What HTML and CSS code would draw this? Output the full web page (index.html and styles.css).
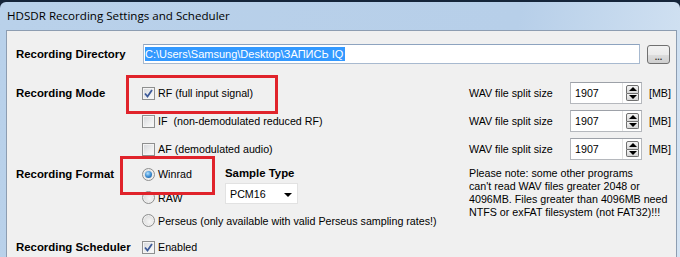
FILE: index.html
```html
<!DOCTYPE html>
<html lang="en">
<head>
	<meta charset="UTF-8">
	<title>HDSDR Recording Settings and Scheduler</title>
	<link rel="stylesheet" href="styles.css">
</head>
<body>
	<div class="window">
		<div class="title_bar">HDSDR Recording Settings and Scheduler</div>
		<div class="client">

			<div class="dir_row">
				<label class="group_label">Recording Directory</label>
				<div class="dir_input"><span class="selected_text">C:\Users\Samsung\Desktop\ЗАПИСЬ IQ</span></div>
				<button class="browse_button">...</button>
			</div>

			<div class="section mode_section">
				<label class="group_label">Recording Mode</label>
				<div class="option marked marked_rf">
					<span class="checkbox">
						<svg width="9" height="9" viewBox="0 0 9 9"><path d="M1 4.5 L3.5 7.5 L8 1" fill="none" stroke="#3d5a99" stroke-width="1.8"/></svg>
					</span>RF (full input signal)
				</div>
				<div class="split">
					<span class="split_label">WAV file split size</span>
					<div class="spin_box"><span class="spin_value">1907</span><span class="spin_buttons"><span class="spin_up"></span><span class="spin_down"></span></span></div>
					<span class="split_unit">[MB]</span>
				</div>
				<div class="option"><span class="checkbox"></span>IF&nbsp; (non-demodulated reduced RF)</div>
				<div class="split">
					<span class="split_label">WAV file split size</span>
					<div class="spin_box"><span class="spin_value">1907</span><span class="spin_buttons"><span class="spin_up"></span><span class="spin_down"></span></span></div>
					<span class="split_unit">[MB]</span>
				</div>
				<div class="option"><span class="checkbox"></span>AF (demodulated audio)</div>
				<div class="split">
					<span class="split_label">WAV file split size</span>
					<div class="spin_box"><span class="spin_value">1907</span><span class="spin_buttons"><span class="spin_up"></span><span class="spin_down"></span></span></div>
					<span class="split_unit">[MB]</span>
				</div>
			</div>

			<div class="section format_section">
				<label class="group_label format_label">Recording Format</label>
				<div class="format_options">
					<div class="format_top">
						<div class="format_radios">
							<div class="option winrad_row marked marked_winrad"><span class="radio selected"></span>Winrad</div>
							<div class="option raw_row"><span class="radio"></span>RAW</div>
						</div>
						<div class="sample_type">
							<div class="sample_title">Sample Type</div>
							<div class="dropdown"><span>PCM16</span><span class="dropdown_arrow"></span></div>
						</div>
					</div>
					<div class="option perseus_row"><span class="radio"></span>Perseus (only available with valid Perseus sampling rates!)</div>
				</div>
				<p class="note">Please note: some other programs<br>can't read WAV files greater 2048 or<br>4096MB. Files greater than 4096MB need<br>NTFS or exFAT filesystem (not FAT32)!!!</p>
			</div>

			<div class="section scheduler_section">
				<label class="group_label">Recording Scheduler</label>
				<div class="option">
					<span class="checkbox">
						<svg width="9" height="9" viewBox="0 0 9 9"><path d="M1 4.5 L3.5 7.5 L8 1" fill="none" stroke="#3d5a99" stroke-width="1.8"/></svg>
					</span>Enabled
				</div>
			</div>

		</div>
	</div>
</body>
</html>
```

FILE: styles.css
```css
* {
	box-sizing: border-box;
}

body {
	margin: 0;
	background-color: #15253a;
	font-family: "Liberation Sans", Arial, sans-serif;
	font-size: 10.7px;
	color: #000;
	overflow: hidden;
}

.window {
	width: 680px;
	height: 255px;
	margin-top: 2px;
	border-radius: 6px 6px 0 0;
	overflow: hidden;
	background: linear-gradient(100deg, #b9d1ea 0%, #b7cfe9 72%, #d5e4f3 100%);
}

.title_bar {
	height: 28px;
	padding-left: 7px;
	line-height: 28px;
	font-family: "Open Sans", "Noto Sans", sans-serif;
	font-size: 11.6px;
	color: #000;
}

.client {
	margin: 0 3px 0 6px;
	height: 227px;
	border: 1px solid #8d9db1;
	border-bottom: none;
	background-color: #f0f0f0;
	padding-left: 9px;
}

.group_label {
	font-weight: bold;
	font-size: 11.4px;
	display: block;
}

/* Directory row */
.dir_row {
	display: flex;
	align-items: center;
	margin-top: 13px;
	height: 20px;
}

.dir_row .group_label {
	width: 127px;
}

.dir_input {
	width: 497px;
	height: 20px;
	border: 1px solid #a7b9cf;
	border-top-color: #8da3bf;
	background-color: #fff;
	padding: 2px 1px;
	display: flex;
}

.selected_text {
	background-color: #3399ff;
	color: #fff;
	line-height: 14px;
	padding-right: 2px;
	font-size: 11px;
}

.browse_button {
	margin-left: 7px;
	width: 23px;
	height: 19px;
	border: 1px solid #707070;
	border-radius: 3px;
	background: linear-gradient(#f2f2f2 0%, #ebebeb 50%, #dddddd 51%, #cfcfcf 100%);
	font-family: "Liberation Sans", Arial, sans-serif;
	font-size: 9px;
	font-weight: bold;
	color: #333;
	padding: 6px 0 0 0;
	line-height: 10px;
}

/* Sections laid out in three columns */
.section {
	display: grid;
	grid-template-columns: 126px 327px 1fr;
}

.mode_section {
	margin-top: 15px;
	grid-template-rows: repeat(3, 28px);
}

.mode_section .group_label {
	grid-column: 1;
	align-self: center;
}

.mode_section .option {
	grid-column: 2;
}

.mode_section .split {
	grid-column: 3;
}

.option {
	display: flex;
	align-items: center;
	white-space: nowrap;
}

.checkbox {
	width: 13px;
	height: 13px;
	margin-right: 3px;
	border: 1px solid #8e8f8f;
	box-shadow: inset 0 0 0 1px #f4f4f4;
	background: linear-gradient(135deg, #d4d6da 0%, #eeeff0 60%, #fbfbfb 100%);
	display: flex;
	align-items: center;
	justify-content: center;
	flex-shrink: 0;
}

.radio {
	width: 13px;
	height: 13px;
	margin-right: 3px;
	border: 1px solid #8e8f8f;
	border-radius: 50%;
	background: radial-gradient(circle at 60% 60%, #f7f7f7 0%, #dcdcdc 70%, #cfcfcf 100%);
	box-shadow: inset 0 0 0 1px #f0f0f0;
	display: flex;
	align-items: center;
	justify-content: center;
	flex-shrink: 0;
}

.radio.selected::after {
	content: "";
	width: 7px;
	height: 7px;
	border-radius: 50%;
	background: radial-gradient(circle at 40% 35%, #b6e2ff 0%, #3f8fd3 50%, #174f8f 100%);
}

/* Red annotation frames drawn over the dialog */
.marked {
	position: relative;
}

.marked::before {
	content: "";
	position: absolute;
	border: 3px solid #e0232b;
}

.marked_rf::before {
	left: -16px;
	top: -4px;
	width: 146px;
	height: 33px;
}

.marked_winrad::before {
	left: -22px;
	top: -7px;
	width: 89px;
	height: 33px;
}

/* WAV split size */
.split {
	display: flex;
	align-items: center;
}

.split_label {
	width: 101px;
}

.spin_box {
	width: 72px;
	height: 22px;
	border: 1px solid #b5b8bd;
	border-top-color: #9da1a8;
	background-color: #fff;
	display: flex;
	align-items: center;
	padding-left: 4px;
}

.spin_value {
	flex: 1;
}

.spin_buttons {
	width: 19px;
	height: 20px;
	border-left: 1px solid #e3e3e3;
	padding: 2px 2px 2px 3px;
	display: flex;
	flex-direction: column;
}

.spin_up,
.spin_down {
	flex: 1;
	border: 1px solid #707070;
	background: linear-gradient(#f4f4f4, #d6d6d6);
	display: flex;
	align-items: center;
	justify-content: center;
}

.spin_up {
	border-radius: 2px 2px 0 0;
}

.spin_down {
	border-radius: 0 0 2px 2px;
	border-top: none;
}

.spin_up::after {
	content: "";
	border-left: 4px solid transparent;
	border-right: 4px solid transparent;
	border-bottom: 4px solid #000;
}

.spin_down::after {
	content: "";
	border-left: 4px solid transparent;
	border-right: 4px solid transparent;
	border-top: 4px solid #000;
}

.split_unit {
	margin-left: 7px;
}

/* Recording format */
.format_label {
	line-height: 22px;
}

.format_top {
	display: flex;
}

.format_radios {
	width: 83px;
}

.winrad_row {
	height: 22px;
}

.raw_row {
	height: 25px;
}

.perseus_row {
	height: 21px;
}

.sample_title {
	font-weight: bold;
	font-size: 11.4px;
	height: 20px;
	line-height: 20px;
}

.dropdown {
	width: 73px;
	height: 21px;
	border: 1px solid #e2e2e2;
	background-color: #fff;
	display: flex;
	align-items: center;
	justify-content: space-between;
	padding: 0 5px 0 4px;
}

.dropdown_arrow {
	border-left: 4px solid transparent;
	border-right: 4px solid transparent;
	border-top: 4px solid #000;
	margin-top: 2px;
}

.note {
	margin: 0;
	padding-top: 4px;
	line-height: 13px;
}

.scheduler_section {
	margin-top: 5px;
	height: 22px;
	align-items: center;
}
```
